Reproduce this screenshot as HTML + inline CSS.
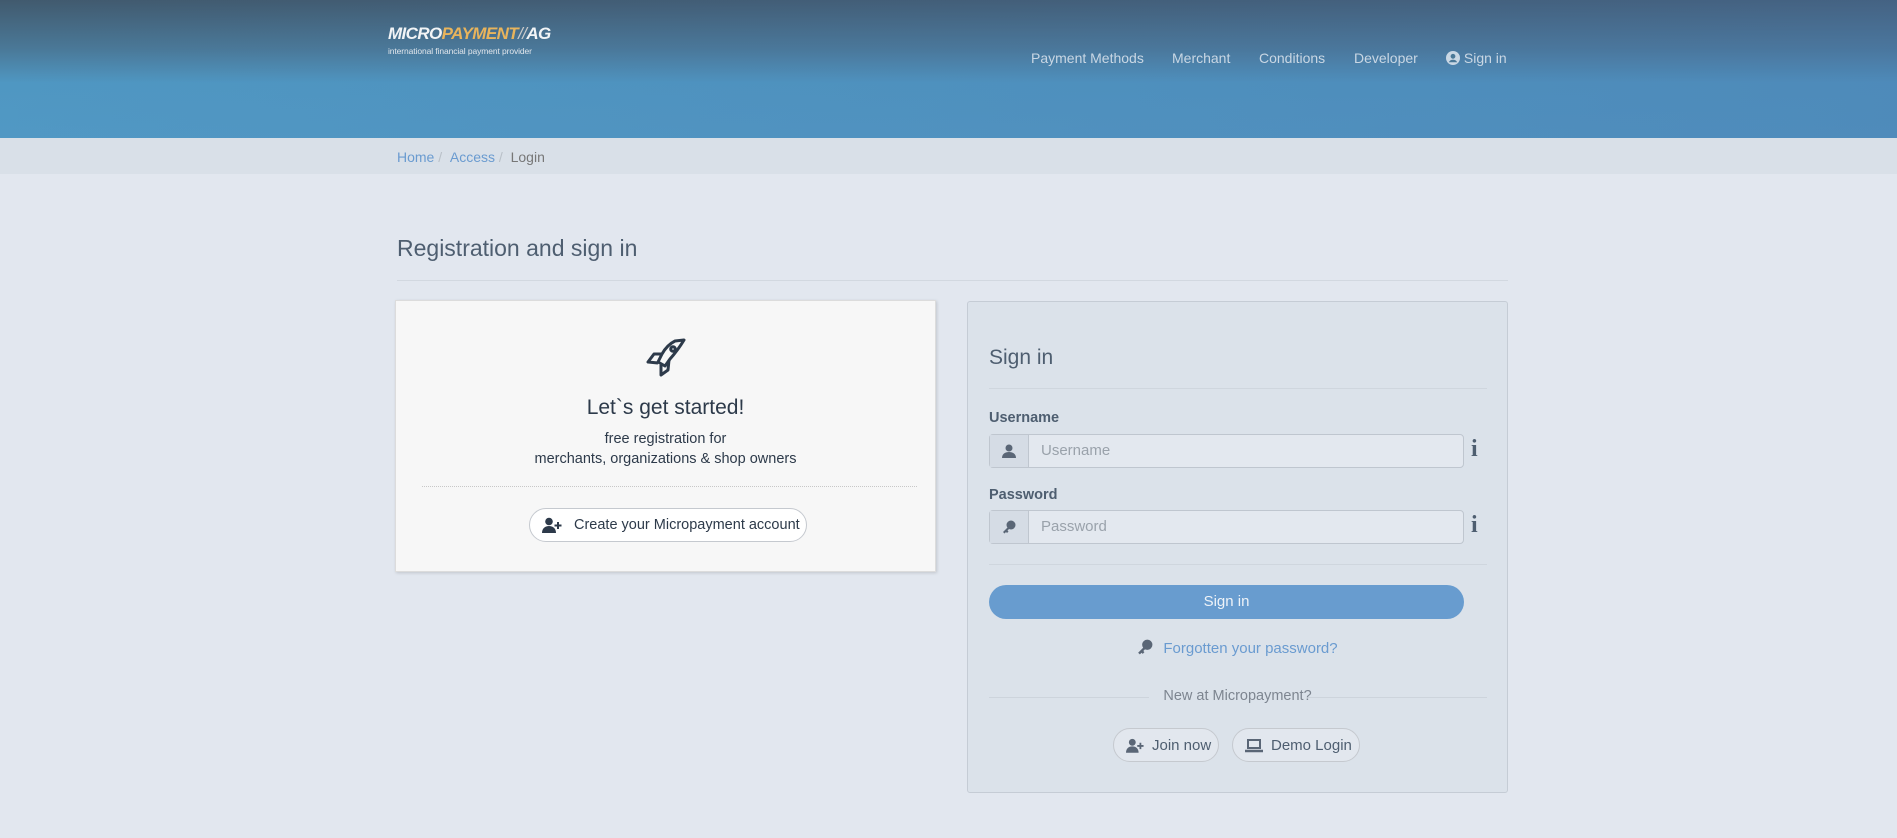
<!DOCTYPE html>
<html><head><meta charset="utf-8"><style>
*{box-sizing:border-box;margin:0;padding:0}
body{width:1897px;height:838px;overflow:hidden;background:#e2e7ef;font-family:"Liberation Sans",Arial,sans-serif;font-size:15px;color:#3a4656;position:relative}
.abs{position:absolute}
.hdr{left:0;top:0;width:1897px;height:138px;background:linear-gradient(180deg,#415a6e 0%,#4a7897 35%,#4f97c2 60%,#5198c4 100%)}
.hdr:after{content:"";position:absolute;inset:0;background:linear-gradient(90deg,rgba(80,160,205,.0),rgba(75,115,170,.35))}
.nav{top:50px;color:#c9d7e4;font-size:14px;z-index:2;white-space:nowrap}
.bc{left:0;top:138px;width:1897px;height:36px;background:#d9e0e8}
.card1{left:395px;top:300px;width:541px;height:272px;background:#f7f7f7;border:1px solid #dcdcdc;box-shadow:1px 1px 3px rgba(0,0,0,.15)}
.card2{left:967px;top:301px;width:541px;height:492px;background:#dbe2ea;border:1px solid #c5ccd5;border-radius:3px}
.pill{border:1px solid #c5c9cf;border-radius:17px;height:34px;display:flex;align-items:center;font-size:15px;white-space:nowrap}
.inp{height:34px;border:1px solid #bfc6cf;border-radius:4px;background:#e3e8ef;display:flex}
.inp .ad{width:39px;border-right:1px solid #bfc6cf;background:#d5dce5;display:flex;align-items:center;justify-content:center}
.inp .ph{padding-left:12px;color:#9aa2ab;line-height:32px}
.info{font-weight:bold;font-size:24px;color:#4e5e70;font-family:'Liberation Serif',serif}
</style></head><body>
<div class="abs hdr"></div>
<div class="abs" style="left:388px;top:24px;z-index:2;font-style:italic;font-weight:bold;font-size:17px;letter-spacing:-.6px;color:#f2f4f6">MICRO<span style="color:#e8b45c">PAYMENT</span><span style="font-weight:normal;color:#ccc">//</span>AG</div>
<div class="abs" style="left:388px;top:46px;z-index:2;font-size:8.5px;color:#e0e6ec;letter-spacing:-.1px">international financial payment provider</div>
<div class="abs nav" style="left:1031px">Payment Methods</div>
<div class="abs nav" style="left:1172px">Merchant</div>
<div class="abs nav" style="left:1259px">Conditions</div>
<div class="abs nav" style="left:1354px">Developer</div>
<div class="abs nav" style="left:1446px"><svg width="14" height="14" viewBox="0 0 14 14" style="vertical-align:-2px"><circle cx="7" cy="7" r="7" fill="#c9d7e4"/><circle cx="7" cy="5.3" r="2.4" fill="#4a7897"/><path d="M2.8 11.3c1-2 2.5-2.6 4.2-2.6s3.2.6 4.2 2.6" fill="#4a7897"/></svg> Sign in</div>
<div class="abs bc"></div>
<div class="abs" style="left:397px;top:149px;font-size:14px"><span style="color:#6a9bd0">Home</span><span style="color:#b9c0c8"> / </span>&nbsp;<span style="color:#6a9bd0">Access</span><span style="color:#b9c0c8"> / </span>&nbsp;<span style="color:#777">Login</span></div>
<div class="abs" style="left:397px;top:235px;font-size:23px;color:#4e5e70">Registration and sign in</div>
<div class="abs" style="left:397px;top:280px;width:1111px;border-top:1px solid #d2d8e0"></div>
<div class="abs card1">
<svg class="abs" style="left:247px;top:34px" width="46" height="46" viewBox="0 0 46 46" fill="none" stroke="#2d3a4a" stroke-width="3" stroke-linejoin="round"><path d="M41 5 L32 6 Q24 10 19 19 L15 27 L22 31 L27 24 Q35 15 41 5Z"/><circle cx="30" cy="14" r="2.3"/><path d="M19 19 L11 19 L5 27 L15 28"/><path d="M26 25 L25 35 L18 40 L18 30"/></svg>
<div class="abs" style="left:0;width:100%;top:95px;text-align:center;font-size:21px;color:#2d3a4a">Let`s get started!</div>
<div class="abs" style="left:0;width:100%;top:128px;text-align:center;font-size:14.5px;line-height:20px;color:#2d3a4a">free registration for<br>merchants, organizations &amp; shop owners</div>
<div class="abs" style="left:26px;width:495px;top:185px;border-top:1px dotted #c8c8c8"></div>
<div class="abs pill" style="left:133px;top:207px;width:278px;background:#fff;color:#2d3a4a;padding-left:12px;font-size:14.5px"><svg width="20" height="16" viewBox="0 0 20 16" fill="#2d3a4a"><circle cx="7" cy="4.5" r="3.8"/><path d="M0 16c0-4.5 3-7 7-7s7 2.5 7 7z"/><path d="M15 5h2v2.5h2.5v2H17V12h-2V9.5h-2.5v-2H15z"/></svg><span style="margin-left:12px">Create your Micropayment account</span></div>
</div>
<div class="abs card2">
<div class="abs" style="left:21px;top:44px;font-size:21px;color:#4e5e70">Sign in</div>
<div class="abs" style="left:21px;top:86px;width:498px;border-top:1px solid #cfd6de"></div>
<div class="abs" style="left:21px;top:108px;font-weight:bold;font-size:14.5px;color:#4e5e70">Username</div>
<div class="abs inp" style="left:21px;top:132px;width:475px"><div class="ad"><svg width="14" height="14" viewBox="0 0 14 14" fill="#5a6676"><circle cx="7" cy="4" r="3.5"/><path d="M0 14c0-4 3-6 7-6s7 2 7 6z"/></svg></div><div class="ph">Username</div></div>
<div class="abs info" style="left:503px;top:134px">i</div>
<div class="abs" style="left:21px;top:185px;font-weight:bold;font-size:14.5px;color:#4e5e70">Password</div>
<div class="abs inp" style="left:21px;top:208px;width:475px"><div class="ad"><svg width="14" height="14" viewBox="0 0 14 14" fill="#5a6676"><circle cx="9" cy="5" r="4.5"/><path d="M6 7 L1 12 L2.5 13.5 L4 12 L5 13 L6.5 11.5 L5.5 10.5 L8 8z"/></svg></div><div class="ph">Password</div></div>
<div class="abs info" style="left:503px;top:210px">i</div>
<div class="abs" style="left:21px;top:262px;width:498px;border-top:1px solid #cfd6de"></div>
<div class="abs" style="left:21px;top:283px;width:475px;height:34px;border-radius:17px;background:#689ccf;color:#eef3f8;text-align:center;line-height:34px">Sign in</div>
<div class="abs" style="left:0;width:100%;top:337px;text-align:center;color:#6a9bd0;font-size:15px"><svg width="16" height="16" viewBox="0 0 14 14" fill="#5a6676" style="vertical-align:-2px;margin-right:10px"><circle cx="9" cy="5" r="4.5"/><path d="M6 7 L1 12 L2.5 13.5 L4 12 L5 13 L6.5 11.5 L5.5 10.5 L8 8z"/></svg>Forgotten your password?</div>
<div class="abs" style="left:21px;top:395px;width:160px;border-top:1px solid #cdd4dc"></div>
<div class="abs" style="left:340px;top:395px;width:179px;border-top:1px solid #cdd4dc"></div>
<div class="abs" style="left:0;width:100%;top:386px;text-align:center;color:#7d8590;font-size:14.5px">New at Micropayment?</div>
<div class="abs pill" style="left:145px;top:426px;width:106px;background:#e2e7ee;color:#4e5e70;padding-left:12px"><svg width="18" height="15" viewBox="0 0 20 16" fill="#5a6676"><circle cx="7" cy="4.5" r="3.8"/><path d="M0 16c0-4.5 3-7 7-7s7 2.5 7 7z"/><path d="M15 5h2v2.5h2.5v2H17V12h-2V9.5h-2.5v-2H15z"/></svg><span style="margin-left:8px">Join now</span></div>
<div class="abs pill" style="left:264px;top:426px;width:128px;background:#e2e7ee;color:#4e5e70;padding-left:12px"><svg width="18" height="15" viewBox="0 0 18 15" fill="none" stroke="#5a6676" stroke-width="2"><rect x="3" y="2" width="12" height="8"/><path d="M0 13h18" stroke-width="2.5"/></svg><span style="margin-left:8px">Demo Login</span></div>
</div>
</body></html>
